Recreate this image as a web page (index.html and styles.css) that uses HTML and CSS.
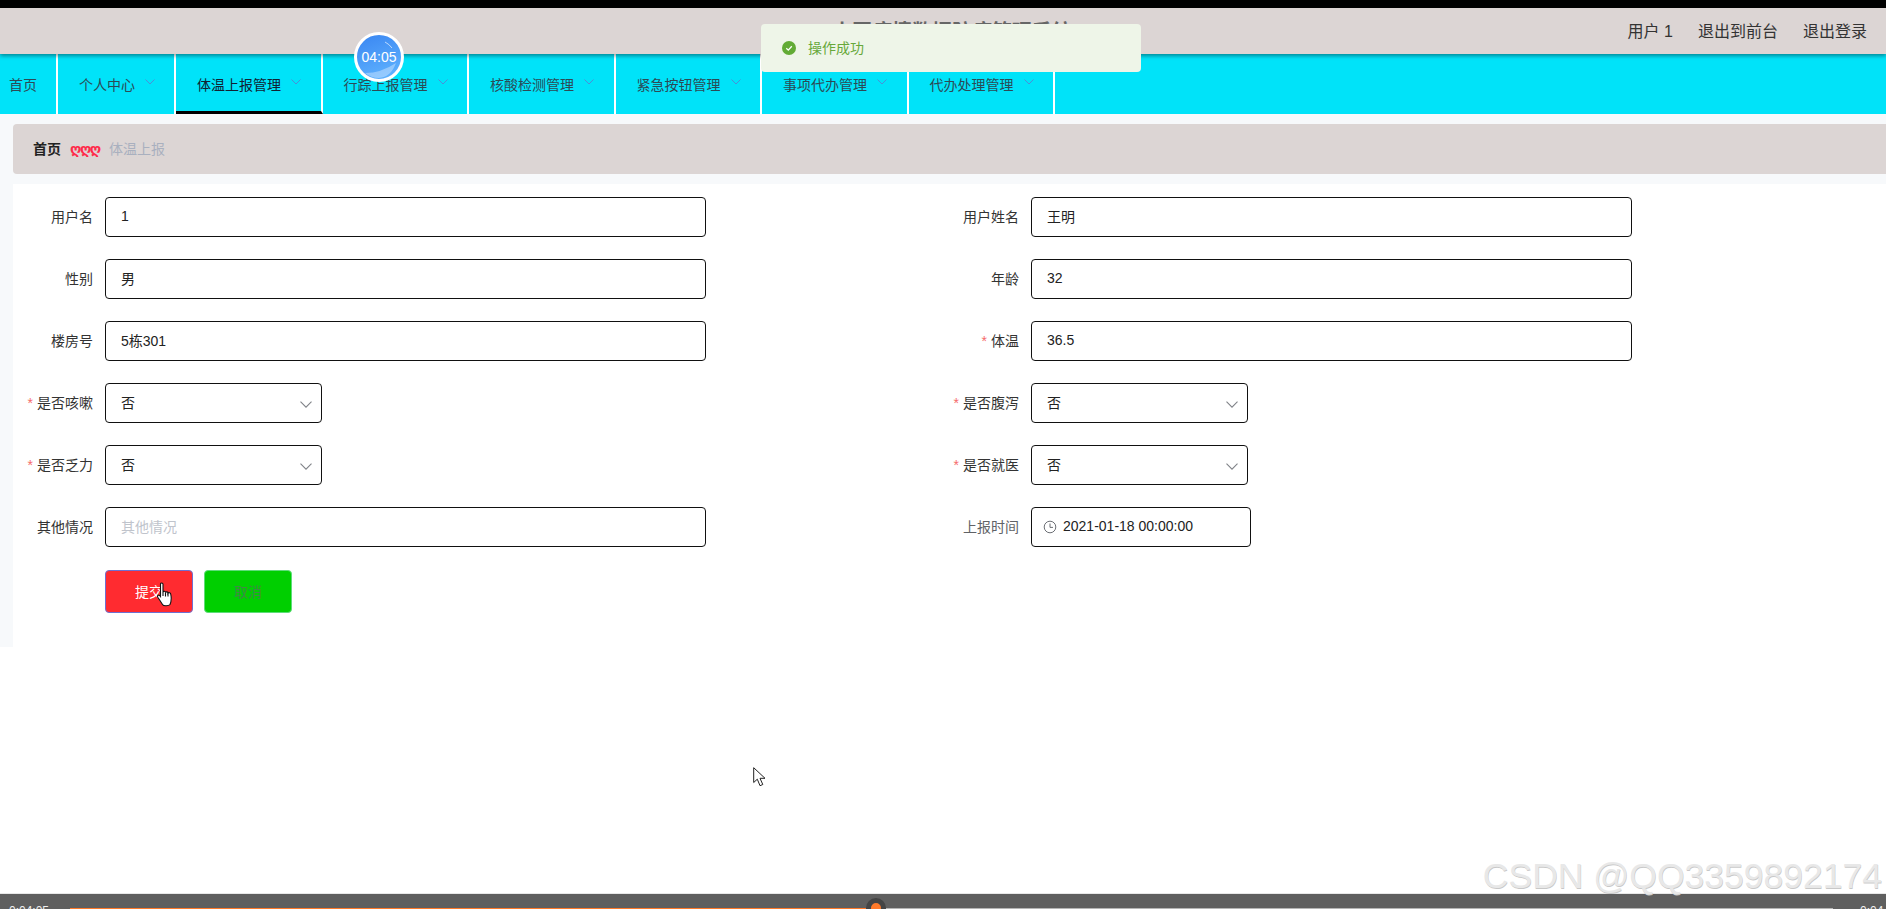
FILE: index.html
```html
<!DOCTYPE html>
<html lang="zh-CN">
<head>
  <meta charset="UTF-8">
  <title>体温上报</title>
  <link rel="stylesheet" href="styles.css">
</head>
<body>
  <div class="topline"></div>
  <header>
    <div class="title">小区疫情数据防疫管理系统</div>
    <div class="user">
      <span>用户 1</span>
      <span>退出到前台</span>
      <span>退出登录</span>
    </div>
  </header>
  <nav>
    <div class="nav-item home">首页</div>
    <div class="nav-item">个人中心<svg class="arrow" viewBox="0 0 10 6"><path d="M.5.5 5 5 9.500.5"/></svg></div>
    <div class="nav-item active">体温上报管理<svg class="arrow" viewBox="0 0 10 6"><path d="M.5.5 5 5 9.500.5"/></svg></div>
    <div class="nav-item">行踪上报管理<svg class="arrow" viewBox="0 0 10 6"><path d="M.5.5 5 5 9.500.5"/></svg></div>
    <div class="nav-item">核酸检测管理<svg class="arrow" viewBox="0 0 10 6"><path d="M.5.5 5 5 9.500.5"/></svg></div>
    <div class="nav-item">紧急按钮管理<svg class="arrow" viewBox="0 0 10 6"><path d="M.5.5 5 5 9.500.5"/></svg></div>
    <div class="nav-item">事项代办管理<svg class="arrow" viewBox="0 0 10 6"><path d="M.5.5 5 5 9.500.5"/></svg></div>
    <div class="nav-item">代办处理管理<svg class="arrow" viewBox="0 0 10 6"><path d="M.5.5 5 5 9.500.5"/></svg></div>
  </nav>
  <main>
    <div class="crumb">
      <b>首页</b>
      <span class="sep">ღღღ</span>
      <span class="current">体温上报</span>
    </div>
    <div class="form">
      <div class="row">
        <label>用户名</label>
        <div class="field wide">1</div>
      </div>
      <div class="row">
        <label>用户姓名</label>
        <div class="field wide">王明</div>
      </div>
      <div class="row">
        <label>性别</label>
        <div class="field wide">男</div>
      </div>
      <div class="row">
        <label>年龄</label>
        <div class="field wide">32</div>
      </div>
      <div class="row">
        <label>楼房号</label>
        <div class="field wide">5栋301</div>
      </div>
      <div class="row">
        <label><i>*</i>体温</label>
        <div class="field wide">36.5</div>
      </div>
      <div class="row">
        <label><i>*</i>是否咳嗽</label>
        <div class="field select">否<svg class="chevron" viewBox="0 0 12 7"><path d="M.5.700 6 6.200 11.500.700"/></svg></div>
      </div>
      <div class="row">
        <label><i>*</i>是否腹泻</label>
        <div class="field select">否<svg class="chevron" viewBox="0 0 12 7"><path d="M.5.700 6 6.200 11.500.700"/></svg></div>
      </div>
      <div class="row">
        <label><i>*</i>是否乏力</label>
        <div class="field select">否<svg class="chevron" viewBox="0 0 12 7"><path d="M.5.700 6 6.200 11.500.700"/></svg></div>
      </div>
      <div class="row">
        <label><i>*</i>是否就医</label>
        <div class="field select">否<svg class="chevron" viewBox="0 0 12 7"><path d="M.5.700 6 6.200 11.500.700"/></svg></div>
      </div>
      <div class="row">
        <label>其他情况</label>
        <div class="field wide placeholder">其他情况</div>
      </div>
      <div class="row">
        <label class="muted">上报时间</label>
        <div class="field date">
          <svg class="clock" viewBox="0 0 14 14"><circle cx="7" cy="7" r="5.800"/><path d="M7 3.500V7.400H10"/></svg>
          2021-01-18 00:00:00
        </div>
      </div>
      <div class="actions">
        <button class="submit">提交</button>
        <button class="cancel">取消</button>
      </div>
    </div>
  </main>
  <div class="spacer"></div>
  <div class="player">
    <span class="time">0:04:05</span>
    <div class="track">
      <div class="played"></div>
      <div class="handle"></div>
    </div>
    <span class="time">0:04</span>
  </div>

  <!-- things floating over the page -->
  <div class="toast">
    <svg class="ok" viewBox="0 0 14 14"><circle cx="7" cy="7" r="7"/><path d="M4.300 7.200 6.300 9.100 9.800 5.300"/></svg>
    操作成功
  </div>
  <div class="timer">
    <svg viewBox="0 0 44 44"><path class="shine" d="M28 7Q32 9 35 13"/><path class="swoosh" d="M8 38Q24 38 39 28Q34 42 22 43Q14 43 8 38Z"/></svg>
    <span>04:05</span>
  </div>
  <svg class="cursor-hand" viewBox="0 0 16 25"><path d="M3.500 2.200C3.500.5 6 .5 6 2.200V10C6.500 9 8.500 9 8.500 10.500C9 9.500 11 9.700 11 11.200C11.500 10.300 13.800 10.500 13.800 12.500C14.500 16 14.500 19 13 22.500C12 24 6.500 24.500 5.500 22.500C4 20 2 17 .8 15.200C-.2 13.500 1.600 12 3.500 14.500Z"/><path d="M6 10V14M8.500 10.500V14.500M11 11.200V14.500"/></svg>
  <svg class="cursor-arrow" viewBox="0 0 13 20"><path d="M.7.700V15.500L4.300 12.200 7 18.700 9.800 17.500 7 11.300H12Z"/></svg>
  <div class="watermark">CSDN @QQ3359892174</div>
</body>
</html>
```
FILE: styles.css
```css
* {
  box-sizing: border-box;
}
html, body {
  height: 100%;
}
body {
  margin: 0;
  position: relative;
  display: flex;
  flex-direction: column;
  overflow: hidden;
  background: white;
  color: #303133;
  font-family: "Liberation Sans", "Noto Sans CJK SC", sans-serif;
  font-size: 14px;
}
.topline {
  height: 8px;
  background: #000;
}
header {
  position: relative;
  z-index: 1;
  height: 46px;
  display: flex;
  justify-content: space-between;
  align-items: center;
  padding: 0 19px 2px 832px;
  background: #dcd5d4;
  box-shadow: 0 2px 4px rgba(0, 0, 0, 0.4);
}
.title {
  font-size: 20px;
  font-weight: bold;
  color: #666;
}
.user {
  display: flex;
  gap: 25px;
  font-size: 16px;
  color: #333;
}
nav {
  height: 60px;
  display: flex;
  background: #00e3f9;
}
.nav-item {
  width: 146.500px;
  display: flex;
  align-items: center;
  gap: 10px;
  padding: 0 0 1px 21px;
  border-right: 2px solid #fff;
  color: #2c4a55;
}
.nav-item.home {
  width: 58px;
  padding-left: 9px;
}
.nav-item:nth-child(2) {
  width: 118px;
}
.nav-item.active {
  border-bottom: 3px solid #000;
  padding-top: 2px;
  padding-bottom: 0;
  color: #123;
}
.arrow {
  width: 10px;
  height: 6px;
  margin-top: -3px;
  fill: none;
  stroke: #4a8fd8;
  stroke-width: 1;
}
main {
  background: #f7f9fb;
  padding: 10px 0 0 13px;
}
.crumb {
  height: 50px;
  display: flex;
  align-items: center;
  gap: 9px;
  padding: 0 0 3px 20px;
  background: #dcd5d4;
  border-radius: 4px 0 0 4px;
}
.crumb b {
  color: #222;
}
.crumb .sep {
  width: 30px;
  padding-top: 3px;
  color: #ff2b4a;
  font-family: "DejaVu Sans", sans-serif;
  font-size: 14px;
  font-weight: bold;
  letter-spacing: -1.500px;
  white-space: nowrap;
}
.crumb .current {
  color: #a9b0bf;
}
.form {
  margin-top: 10px;
  padding: 13px 0 34px;
  background: white;
  display: grid;
  grid-template-columns: 926px 1fr;
  row-gap: 22px;
}
.row {
  display: flex;
  align-items: center;
  gap: 12px;
}
.row label {
  width: 80px;
  padding-bottom: 3px;
  text-align: right;
  color: #333;
}
.row label i {
  margin-right: 4px;
  color: #f56c6c;
  font-style: normal;
}
.row label.muted {
  color: #606266;
}
.field {
  position: relative;
  height: 40px;
  display: flex;
  align-items: center;
  padding: 0 0 3px 15px;
  background: white;
  border: 1px solid #111;
  border-radius: 4px;
  color: #222;
}
.wide {
  width: 601px;
}
.select {
  width: 217px;
}
.date {
  width: 220px;
  padding-left: 11px;
  gap: 6px;
}
.placeholder {
  color: #c0c4cc;
}
.chevron {
  position: absolute;
  right: 9px;
  top: 17px;
  width: 12px;
  height: 7px;
  fill: none;
  stroke: #808388;
  stroke-width: 1.100;
}
.clock {
  width: 14px;
  height: 14px;
  margin-top: 3px;
  fill: none;
  stroke: #6c6f75;
  stroke-width: 1;
}
.actions {
  grid-column: 1 / 3;
  display: flex;
  gap: 11px;
  margin-left: 92px;
  margin-top: 1px;
}
.actions button {
  width: 88px;
  height: 43px;
  padding: 0 0 2px;
  border-radius: 4px;
  font-family: inherit;
  font-size: 14px;
  cursor: pointer;
}
.submit {
  background: #ff2b30;
  border: 1px solid #6f6fd0;
  color: white;
}
.cancel {
  background: #00cf00;
  border: 1px solid #5edc7a;
  color: #3f8a45;
}
.spacer {
  flex: 1;
}
.player {
  height: 16px;
  display: flex;
  padding: 10px 26px 0 9px;
  background: #5f5f5f;
  overflow: hidden;
  border-top: 1px solid #e8e8e8;
}
.player .time {
  color: #eee;
  font-size: 12px;
  line-height: 14px;
}
.player .time:first-child {
  width: 61px;
}
.player .time:last-child {
  width: 0;
  white-space: nowrap;
}
.track {
  position: relative;
  width: 1763px;
  height: 1px;
  margin: 4px 27px 0 0;
  background: #b5b5b5;
}
.played {
  width: 796px;
  height: 1px;
  background: #ff7a2a;
}
.handle {
  position: absolute;
  left: 796px;
  top: -10px;
  width: 20px;
  height: 20px;
  border: 5px solid #444;
  border-radius: 50%;
  background: #ff7a2a;
}
.toast {
  position: absolute;
  left: 761px;
  top: 24px;
  z-index: 5;
  width: 380px;
  height: 48px;
  display: flex;
  align-items: center;
  gap: 12px;
  padding: 0 0 3px 21px;
  background: #eef5e8;
  border-radius: 4px;
  color: #67a83a;
}
.ok {
  width: 14px;
  height: 14px;
  margin-top: 3px;
  fill: #62ab35;
}
.ok path {
  fill: none;
  stroke: #fff;
  stroke-width: 1.300;
}
.timer {
  position: absolute;
  left: 354px;
  top: 32px;
  z-index: 5;
  width: 50px;
  height: 50px;
  display: flex;
  align-items: center;
  justify-content: center;
  border: 3px solid #fff;
  border-radius: 50%;
  background: linear-gradient(160deg, #3a86f2, #62b6ff);
  color: white;
  overflow: hidden;
}
.timer svg {
  position: absolute;
  inset: 0;
}
.timer span {
  position: relative;
}
.shine {
  fill: none;
  stroke: rgba(255, 255, 255, 0.8);
  stroke-width: 0.800;
}
.swoosh {
  fill: rgba(255, 255, 255, 0.35);
}
.cursor-hand {
  position: absolute;
  left: 157px;
  top: 582px;
  z-index: 6;
  width: 16px;
  height: 25px;
  fill: #fff;
  stroke: #111;
  stroke-width: 1.100;
}
.cursor-arrow {
  position: absolute;
  left: 753px;
  top: 767px;
  z-index: 6;
  width: 13px;
  height: 20px;
  fill: #fff;
  stroke: #222;
  stroke-width: 1;
}
.watermark {
  position: absolute;
  right: 4px;
  top: 856px;
  z-index: 6;
  font-size: 35.500px;
  line-height: 40px;
  color: #e8e8e8;
  text-shadow: 0.500px 0.500px 0.500px #c8c8c8;
  white-space: nowrap;
}
```
